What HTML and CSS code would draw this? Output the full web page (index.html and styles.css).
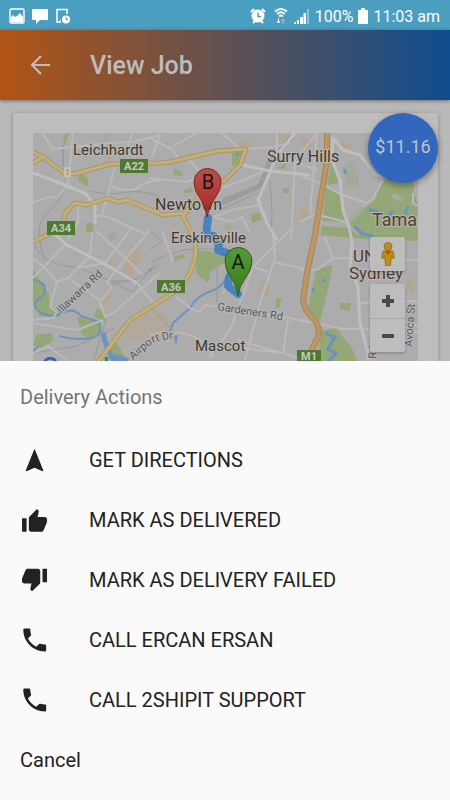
FILE: index.html
```html
<!DOCTYPE html>
<html lang="en">
  <head>
    <meta charset="utf-8" />
    <meta name="viewport" content="width=device-width, initial-scale=1" />
    <title>View Job</title>
    <link rel="stylesheet" href="styles.css">
  </head>
  <body>
    <div class="status-bar">
      <div class="status-group notifications">
        <svg width="16" height="16" viewBox="0 0 16 16"><rect x="1" y="1" width="14" height="14" rx="1" fill="none" stroke="#fff" stroke-width="1.4"/><path d="M2 9l2-2 2 2 2-1 3-3 3 4v5H2z" fill="#fff"/></svg>
        <svg width="16" height="16" viewBox="0 0 16 16"><path d="M1 1h14q1 0 1 1v9q0 1-1 1H8l-4 4v-4H1q-1 0-1-1V2q0-1 1-1z" fill="#fff"/></svg>
        <svg width="16" height="16" viewBox="0 0 16 16"><path d="M6 14H2V1.500h10V6" fill="none" stroke="#fff" stroke-width="1.500"/><circle cx="11" cy="11.500" r="4" fill="#fff"/><path d="M11 9v2.500h2" fill="none" stroke="#4a9ebf"/><path d="M5 12h1" stroke="#fff"/></svg>
      </div>
      <div class="status-group">
        <svg width="16" height="16" viewBox="0 0 16 16"><circle cx="8" cy="8" r="6.500" fill="#fff"/><path d="M1 4l3-3M15 4l-3-3M3 15l2-2M13 15l-2-2" stroke="#fff" stroke-width="2"/><path d="M8 4.500V8.500h3" fill="none" stroke="#4a9ebf" stroke-width="1.500"/></svg>
        <svg class="wifi" width="14" height="16" viewBox="0 0 14 16"><path d="M1 3.500q6-5 12 0M3 6q4-3.500 8 0M5 8.500q2-2 4 0" fill="none" stroke="#fff" stroke-width="1.700"/><path d="M4.500 10v5M3 13l1.500 2L6 13" fill="none" stroke="#fff"/><path d="M9 16v-5M7.500 13L9 11l1.500 2" fill="none" stroke="#a3cede"/></svg>
        <svg width="16" height="16" viewBox="0 0 16 16"><path d="M0 14h2v2H0zM3 12h2v4H3zM6 9h3v7H6zM9.500 5h2.500v11H9.500z" fill="#fff"/><path d="M13 1h2v15h-2z" fill="#8fc4d8"/></svg>
        <span>100%</span>
        <svg width="10" height="16" viewBox="0 0 10 16"><path d="M3 0h4v2h3v14H0V2h3z" fill="#fff"/></svg>
        <span>11:03 am</span>
      </div>
    </div>

    <header class="toolbar">
      <button class="back" aria-label="Back">
        <svg width="20" height="20" viewBox="0 0 20 20"><path d="M11 1L2 10l9 9M2 10h18" fill="none" stroke="#bdbdbd" stroke-width="2.200"/></svg>
      </button>
      <h1>View Job</h1>
    </header>

    <main class="content">
      <div class="card">
        <div class="map">
          <svg class="map-canvas" viewBox="33 133 385 300" role="img" aria-label="Route map">
            <rect x="33" y="133" width="385" height="300" fill="#acacac"/>

            <!-- built up areas -->
            <g fill="#b8a48c" opacity=".75">
              <path d="M134 245l10 10-15 24-9-4 9-22zM106 292l6-2-4 17-8-4zM108 258l10 5-9 6zM262 283l3-5 5 10-2 9-12-3zM236 143l14-3 5 4-9 5zM275 140l13-7 5 4-14 5zM300 136l10 6v10l-10-7zM300 205l14 8-8 9-6-3zM406 275l8 5 1 15-7-6zM75 150h6v5h-6zM343 141l8 3-2 5-9-3zM104 135h4l3 30h-4z"/>
            </g>
            <path d="M150 305l18 10 3 18-21 12-14-5-18 10 13-27z" fill="#b1a99c"/>

            <!-- parks -->
            <g fill="#93a777">
              <path d="M33 270l16 24 1 13 16 4-8 6-18-1-7-12zM77 317l24 3v10l-9 9-10-4zM37 334l15-1 1 8-12 7-8-3zM115 340l12 20-14-1-3-7zM97 308l7 4 1 10-11-6z"/>
              <path d="M78 176l6-2 5 7-2 6-9-7zM86 223h7v9h-7zM173 168l9 4 1 4-9-1zM183 191l9-4 1 5-8 1zM232 153l10-3-2 14-8 2zM277 168l9-5-1 6zM283 188h6v5h-6zM250 215l9-3 3 7-9 4zM63 143l2-10 4 1-4 11z"/>
              <path d="M197 250l23 3 10 6-20 13-2 11-12-10zM174 257l10-3v4l-9 3zM277 298l5 1-3 9-4-1z"/>
              <path d="M331 161l8 22-12 2zM326 187l15 10 6 25-25-1zM322 226l27 2 15 11-43-4zM383 177h31v16l4 12v36l-55-2-15-17 19-16 8-6z"/>
              <path d="M316 269l17-4-6 28-7 28-12-13zM340 303h11l-1 8-10-2zM321 331l15-3 16 20 7 19-42-1z"/>
            </g>
            <g fill="#a0ac99">
              <path d="M345 165l7-3 7 13-1 12-13 1zM109 234l5-2 4 4-6 6-4-3zM226 223l7 3-3 6-5-3z"/>
            </g>
            <path d="M391 194q10 0 12 7q-9 1-12-7zM347 218l15-12-2 8-9 8z" fill="#a5aba5"/>

            <!-- water -->
            <g fill="none" stroke="#6b93c2" stroke-width="2">
              <path d="M33 280q12 2 12 9t-8 11q-6 7 5 13t20 0q12-6 19 3l18 6q3 10-2 14-15 6-38 0M33 352l5-6"/>
              <path d="M103 332q3 18 12 30" stroke-width="5"/>
              <path d="M113 357l15 4" stroke-width="6"/>
              <path d="M234 263q-10 24-20 27-17 5-24 18l-17 15-5 13"/>
              <path d="M63 145v22" stroke-width="1"/>
              <path d="M354 226l9 8 10 2M369 209l12 5M387 216l6-5M405 214l3-8" stroke-width="3"/>
              <path d="M325 333l10 4-7 12 8 4-9 10M344 169l2 5M313 288l1 4M323 279l1 3" stroke-width="3"/>
            </g>
            <path d="M174 336l4-1-2 11zM148 270l3-2 1 3-3 1zM236 153h3v3h-3z" fill="#6b93c2"/>

            <!-- railways -->
            <g fill="none" stroke="#989898" stroke-width="1">
              <path d="M63 187q-2 15-13 23-12 11-11 25t6 25M35 245q7 20 45 23l30 13h23l27-16M88 191q23 5 38 1 20-2 34 5M112 282l20 10 24-29M110 285l25-7M107 317q-8 23-13 43M150 263q27-14 44-14h30M150 232l12 9-12 9M151 308l25 25M147 310l30-17M115 328l-38 18-44 7M270 180q4 40 0 55M217 268v35"/>
              <path d="M215 206l45-20 10-25 22-24" stroke="#9c9c9c" stroke-width="5"/>
              <path d="M223 199l35-13M218 211l44-20"/>
            </g>

            <!-- side streets -->
            <g fill="none" stroke="#bababa" stroke-width="2" stroke-linejoin="round">
              <path d="M42 133l11 16 57-6 23-1 27-7M73 133l-5 50-10 14q-15 0-25 6M132 133l-5 17M160 135l-8 22M115 167l-13 48M112 187q13 5 24 2 9-8 24-9M95 215l13 2 39 18M78 205v18l-10 16M150 138l23 12 5 8M150 178l37 4 14-6M188 158l15 19M197 133l-25 14M222 133l18 16M246 149l27-2 17-4"/>
              <path d="M223 188l40-16M213 217l19-7 28-5M213 217l20 5 9-5 8 16M293 163l24-30M277 155l40 15M277 133v22M295 163l-4 77M317 133l-7 80M300 175l20 8 23 12M300 222l15-8 35 9M325 237l8 21-16 12h-17M333 258l85 2M300 320l43 9h20l55 3"/>
              <path d="M33 258l14 12 10 12-7 25 7 5M65 245l-32 33M95 230l22 20 26 25M130 230l-25 33-28 5-9 10-10 3M68 278l32 22M92 233l-2 24-13 11M150 230l-13 15-19 23-11 14 5 6-12 14 5 15 8-4 47-40M33 320l20-2 4-6M33 323l44 7 26-10"/>
              <path d="M273 230l2 28-15 45-15 57M273 262l37 8M290 230l-37 37-23 63-21 28M253 267l15 5M240 348l43 5 5-33M162 230l11 32M177 297l13 11 10 4 5-7 85 13 20 4M150 335q50-10 63 22M237 340l70 20M383 180l-11 20-5 3-24-8M413 193v10l5 3M369 333l49-8M360 303l58-2M137 283l18 22M235 266l-12 28M33 353l15-7 20 15"/>
            </g>
            <g fill="none" stroke="#bfbfbf" stroke-width="3" stroke-linejoin="round">
              <path d="M33 173l32 12 21 9 9 13v17M50 230l17 15 36 18 34 20M295 133l-18 22-9 22-10 23 9 23 10 17M242 165l28 6 40 4M333 137l-1 23 8 20 3 30 6 17 3 15-2 25 8 20 2 36 8 30v20M333 138l10 12 17 5 15 19 10 4"/>
            </g>

            <!-- main roads -->
            <g fill="none" stroke-linejoin="round">
              <path d="M33 152l10 5 20 15 12 2 35-10 50-1 10-1 47-11 29-2-6 16-15 15-25 15-17 21 7 14q8 15 5 27-3 22-25 38l-40 25-32 42M33 163l10-6M33 242l30-15 2-14 10-10 12 2 20-7 11 4 9-2 36 15 20-2" stroke="#a99568" stroke-width="5"/>
              <path d="M33 152l10 5 20 15 12 2 35-10 50-1 10-1 47-11 29-2-6 16-15 15-25 15-17 21 7 14q8 15 5 27-3 22-25 38l-40 25-32 42M33 163l10-6M33 242l30-15 2-14 10-10 12 2 20-7 11 4 9-2 36 15 20-2" stroke="#c3af77" stroke-width="3"/>
              <path d="M327 133v27l-12 75-8 38-4 27q1 9 8 16 12 12 6 23l-11 22" stroke="#a58458" stroke-width="6"/>
              <path d="M327 133v27l-12 75-8 38-4 27q1 9 8 16 12 12 6 23l-11 22" stroke="#bf9663" stroke-width="4"/>
              <path d="M65 168h5v8h-5z" stroke="#c0c0c0" stroke-width="2"/>
            </g>

            <!-- road shields -->
            <g class="shield">
              <rect x="120" y="159" width="28" height="14"/><text x="134" y="170">A22</text>
              <rect x="47" y="221" width="28" height="14"/><text x="61" y="232">A34</text>
              <rect x="157" y="280" width="28" height="13"/><text x="171" y="291">A36</text>
              <rect x="297" y="350" width="24" height="13"/><text x="309" y="360">M1</text>
            </g>

            <!-- route -->
            <path d="M208 218l-2 17 8 1 5 9-1 5 12 4 4 12-5 12-1 8 10 8" fill="none" stroke="#3f7dbd" stroke-width="8" stroke-linecap="round" stroke-linejoin="round" opacity=".9"/>

            <g class="place">
              <text x="73" y="155">Leichhardt</text>
              <text class="place-big" x="267" y="162">Surry Hills</text>
              <text x="171" y="243">Erskineville</text>
              <text x="195" y="351">Mascot</text>
              <text class="place-big" x="155" y="210">Newtown</text>
            </g>
            <g class="place campus">
              <text class="place-large" x="372" y="226">Tamarama</text>
              <text x="353" y="262">UNSW</text>
              <text x="349" y="279">Sydney</text>
            </g>
            <g class="street">
              <path id="airport" d="M133 360l20-17q6-3 25-5" fill="none" stroke="none"/>
              <text transform="translate(61 314) rotate(-43)">Illawarra Rd</text>
              <text transform="translate(217 310) rotate(9)">Gardeners Rd</text>
              <text><textPath href="#airport">Airport Dr</textPath></text>
              <text transform="translate(412 347) rotate(-86)">Avoca St</text>
              <text transform="translate(376 359) rotate(-86)">Rd</text>
            </g>
            <text class="google" x="41" y="376"><tspan fill="#3463b5">G</tspan><tspan fill="#b5493c">o</tspan><tspan fill="#bd9b2a">o</tspan><tspan fill="#3463b5">g</tspan><tspan fill="#2c8a4c">l</tspan><tspan fill="#b5493c">e</tspan></text>

            <!-- markers -->
            <defs>
              <linearGradient id="red" x2="0" y2="1"><stop stop-color="#bd504b"/><stop offset="1" stop-color="#a52622"/></linearGradient>
              <linearGradient id="green" x2="0" y2="1"><stop stop-color="#559c39"/><stop offset="1" stop-color="#397a1d"/></linearGradient>
            </defs>
            <g class="marker">
              <path d="M207 217q-1-10-7-19-6-7-6-16a13 13 0 0 1 27 0q0 8-6 16-7 9-8 19z" fill="url(#red)" stroke="#7c2522"/>
              <text x="208" y="189">B</text>
              <path d="M238 296q-1-10-7-19-6-7-6-16a13 13 0 0 1 27 0q0 8-6 16-7 9-8 19z" fill="url(#green)" stroke="#305d1b"/>
              <text x="238" y="269">A</text>
            </g>
          </svg>

          <div class="map-controls">
            <button class="map-button pegman" aria-label="Street View">
              <svg width="14" height="24" viewBox="0 0 14 24"><path d="M2 9h10l1.500 7-2 .5-1-3-1 10h-5l-1-10-1 3-2-.5z" fill="#c18d15" stroke="#8d6715" stroke-width=".7"/><circle cx="7" cy="4.500" r="4" fill="#c18d15" stroke="#8d6715" stroke-width=".7"/><path d="M4 9h6l-3 4z" fill="#aa571c"/></svg>
            </button>
            <div class="zoom">
              <button class="map-button" aria-label="Zoom in"><svg width="14" height="14" viewBox="0 0 14 14"><path d="M7 1v12M1 7h12" stroke="#4b4b4b" stroke-width="4"/></svg></button>
              <button class="map-button" aria-label="Zoom out"><svg width="14" height="14" viewBox="0 0 14 14"><path d="M1 7h12" stroke="#4b4b4b" stroke-width="4"/></svg></button>
            </div>
          </div>
        </div>
        <div class="price">$11.16</div>
      </div>
    </main>

    <section class="sheet" role="dialog" aria-labelledby="sheet-title">
      <h2 id="sheet-title">Delivery Actions</h2>
      <button class="action">
        <svg viewBox="-0.3 -1.200 25.400 25.400"><path d="M12 2L4.500 20.290l.71.71L12 18l6.790 3 .71-.71z"/></svg>
        GET DIRECTIONS
      </button>
      <button class="action">
        <svg viewBox="-0.8 -2.600 26.400 26.400"><path d="M1 21h4V9H1v12zm22-11c0-1.100-.9-2-2-2h-6.310l.95-4.570.03-.32c0-.41-.17-.79-.44-1.060L14.170 1 7.590 7.590C7.220 7.950 7 8.450 7 9v10c0 1.100.9 2 2 2h9c.83 0 1.540-.5 1.840-1.220l3.020-7.050c.09-.23.14-.47.14-.73v-2z"/></svg>
        MARK AS DELIVERED
      </button>
      <button class="action">
        <svg viewBox="-0.8 -0.200 26.400 26.400"><path d="M15 3H6c-.83 0-1.540.5-1.840 1.220l-3.020 7.050c-.09.23-.14.47-.14.73v2c0 1.100.9 2 2 2h6.310l-.95 4.570-.03.32c0 .41.17.79.44 1.060L9.830 23l6.590-6.590c.36-.36.58-.86.58-1.410V5c0-1.100-.9-2-2-2zm4 0v12h4V3h-4z"/></svg>
        MARK AS DELIVERY FAILED
      </button>
      <button class="action">
        <svg viewBox="0.4 0.200 23.600 23.600"><path d="M6.620 10.790c1.440 2.830 3.760 5.140 6.590 6.590l2.200-2.200c.27-.27.67-.36 1.020-.24 1.120.37 2.330.57 3.570.57.55 0 1 .45 1 1V20c0 .55-.45 1-1 1-9.390 0-17-7.610-17-17 0-.55.45-1 1-1h3.500c.55 0 1 .45 1 1 0 1.250.2 2.450.57 3.570.11.35.03.74-.25 1.020l-2.200 2.200z"/></svg>
        CALL ERCAN ERSAN
      </button>
      <button class="action">
        <svg viewBox="0.4 0.200 23.600 23.600"><path d="M6.620 10.790c1.440 2.830 3.760 5.140 6.590 6.590l2.200-2.200c.27-.27.67-.36 1.020-.24 1.120.37 2.330.57 3.570.57.55 0 1 .45 1 1V20c0 .55-.45 1-1 1-9.390 0-17-7.610-17-17 0-.55.45-1 1-1h3.500c.55 0 1 .45 1 1 0 1.250.2 2.450.57 3.570.11.35.03.74-.25 1.020l-2.200 2.200z"/></svg>
        CALL 2SHIPIT SUPPORT
      </button>
      <button class="action">Cancel</button>
    </section>
  </body>
</html>
```
FILE: styles.css
```css
* {
  box-sizing: border-box;
  margin: 0;
  padding: 0;
}

body {
  height: 100vh;
  overflow: hidden;
  font-family: Roboto, "Liberation Sans", sans-serif;
  background-color: #b9b9b9;
  color: #222;
}

button {
  border: 0;
  background: none;
  font: inherit;
  color: inherit;
  cursor: pointer;
}

svg {
  display: block;
  flex: none;
}

.status-bar {
  display: flex;
  align-items: center;
  justify-content: space-between;
  height: 30px;
  padding: 2px 10px 0 9px;
  background-color: #4a9ebf;
  color: #fff;
  font-size: 16px;
}

.status-group {
  display: flex;
  align-items: center;
  gap: 5px;
}

.notifications {
  gap: 7px;
}

.wifi {
  margin: 0 1px 0 3px;
}

.toolbar {
  display: flex;
  align-items: center;
  height: 70px;
  padding-left: 20px;
  background: linear-gradient(to right, #b25414, #0f4d8e);
  color: #bdbdbd;
  box-shadow: 0 1px 4px rgba(0, 0, 0, 0.4);
}

.toolbar h1 {
  margin-left: 30px;
  font-size: 25px;
  font-weight: 500;
}

.back {
  padding: 10px;
}

.content {
  padding: 13px 12px 0 13px;
}

.card {
  position: relative;
  padding: 20px;
  border-radius: 2px;
  background-color: #bdbdbd;
  box-shadow: 0 1px 4px rgba(0, 0, 0, 0.3);
}

.map {
  position: relative;
  overflow: hidden;
}

.map-canvas {
  width: 100%;
}

.place text {
  font-size: 15px;
  fill: #43372b;
  stroke: #b8b8b8;
  stroke-width: 2px;
  paint-order: stroke;
}

.place .place-big {
  font-size: 16px;
}

.campus text {
  font-size: 17px;
  fill: #533b2e;
}

.campus .place-large {
  font-size: 18px;
}

.street text {
  font-size: 11px;
  fill: #595959;
  stroke: #b8b8b8;
  stroke-width: 2px;
  paint-order: stroke;
}

.shield rect {
  fill: #4e7931;
}

.shield text {
  font-size: 11px;
  font-weight: 700;
  text-anchor: middle;
  fill: #c5cbbf;
}

.google {
  font-size: 26px;
  font-weight: 500;
}

.marker text {
  font-size: 20px;
  text-anchor: middle;
  fill: #151515;
}

.map-controls {
  position: absolute;
  top: 104px;
  right: 13px;
  display: flex;
  flex-direction: column;
  gap: 13px;
}

.map-button {
  display: flex;
  align-items: center;
  justify-content: center;
  width: 35px;
  height: 34px;
}

.pegman,
.zoom {
  border-radius: 2px;
  background-color: #bdbdbd;
  box-shadow: 0 1px 3px rgba(0, 0, 0, 0.25);
}

.zoom .map-button + .map-button {
  border-top: 1px solid #a8a8a8;
}

.price {
  position: absolute;
  top: 0;
  right: 0;
  width: 70px;
  height: 70px;
  border-radius: 50%;
  background-color: #3366bd;
  color: #bdc3cf;
  font-size: 18px;
  line-height: 68px;
  text-align: center;
  box-shadow: 0 3px 6px rgba(0, 0, 0, 0.35);
}

.sheet {
  position: fixed;
  right: 0;
  bottom: 0;
  left: 0;
  padding-bottom: 10px;
  background-color: #fafafa;
}

.sheet h2 {
  padding: 0 20px;
  color: #757575;
  font-size: 20px;
  font-weight: 400;
  line-height: 72px;
  height: 69px;
}

.action {
  display: flex;
  align-items: center;
  gap: 39px;
  width: 100%;
  height: 60px;
  padding: 0 20px;
  font-size: 20px;
  text-align: left;
}

.action svg {
  width: 30px;
  height: 30px;
  fill: #222;
}
```
